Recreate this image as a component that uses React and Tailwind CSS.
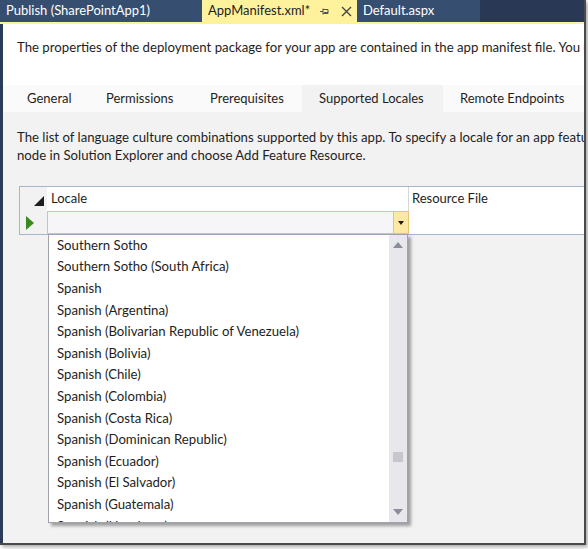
const locales = [
  "Southern Sotho",
  "Southern Sotho (South Africa)",
  "Spanish",
  "Spanish (Argentina)",
  "Spanish (Bolivarian Republic of Venezuela)",
  "Spanish (Bolivia)",
  "Spanish (Chile)",
  "Spanish (Colombia)",
  "Spanish (Costa Rica)",
  "Spanish (Dominican Republic)",
  "Spanish (Ecuador)",
  "Spanish (El Salvador)",
  "Spanish (Guatemala)",
  "Spanish (Honduras)",
];

const font = { fontFamily: "Lato, 'Noto Sans', sans-serif" };

function DocTab({ label, active, width, children }) {
  return (
    <div
      className={
        "flex items-center h-full pl-[6px] pr-[5px] text-[13px] shrink-0 " +
        width +
        (active ? " bg-[#fff29d] text-[#1e1e1e]" : " bg-[#364e6f] text-white")
      }
    >
      {label}
      {children}
    </div>
  );
}

function Pin() {
  return (
    <svg width="10" height="9" viewBox="0 0 10 9" className="ml-auto">
      <path d="M0 4.5h3M3 1.5v6M3 2.5h5v4H3M4 5.5h4" stroke="#555" strokeWidth="1" fill="none" />
    </svg>
  );
}

function Close() {
  return (
    <svg width="11" height="11" viewBox="0 0 11 11" className="ml-[11px]">
      <path d="M1 1l9 9M10 1l-9 9" stroke="#444" strokeWidth="1.4" />
    </svg>
  );
}

function OptionTabs() {
  const tabs = [
    ["General", "w-[79px]"],
    ["Permissions", "w-[104px]"],
    ["Prerequisites", "w-[109px]"],
    ["Supported Locales", "w-[141px]"],
    ["Remote Endpoints", "w-[141px]"],
  ];
  return (
    <div className="flex h-[27px] bg-[#fafafa] pl-[7px] mt-[2px]">
      {tabs.map(([t, w], i) => (
        <div
          key={t}
          className={
            "flex items-center pl-[17px] text-[13px] text-[#1e1e1e] shrink-0 " +
            w +
            (i === 3 ? " bg-[#f2f2f2]" : "")
          }
        >
          {t}
        </div>
      ))}
    </div>
  );
}

function ScrollArrow({ up }) {
  return (
    <svg width="10" height="6" viewBox="0 0 10 6">
      <path d={up ? "M0 6L5 0L10 6Z" : "M0 0L5 6L10 0Z"} fill="#8a8d9c" />
    </svg>
  );
}

function LocaleList() {
  return (
    <div className="absolute left-[28px] top-[47px] w-[360px] h-[289px] bg-white border border-[#9ea3ad] shadow-[3px_3px_3px_rgba(0,0,0,0.35)] flex overflow-hidden">
      <div className="flex-1 overflow-hidden pl-[8px]">
        {locales.map((l) => (
          <div key={l} className="h-[21.6px] flex items-center text-[13.2px] text-[#1e1e1e] whitespace-nowrap">
            {l}
          </div>
        ))}
      </div>
      <div className="w-[18px] bg-[#e8e8ec] flex flex-col items-center">
        <div className="mt-[7px]">
          <ScrollArrow up />
        </div>
        <div className="mt-[204px] w-[10px] h-[10px] bg-[#c6c7cd]" />
        <div className="mt-auto mb-[7px]">
          <ScrollArrow />
        </div>
      </div>
    </div>
  );
}

function Grid() {
  return (
    <div className="relative ml-[2px] mt-[22px] border-t border-l border-b border-[#a4b6cb]">
      <div className="flex h-[24px] bg-white">
        <div className="w-[27px] bg-[#f2f2f2] flex items-end justify-end pr-[3px] pb-[5px]">
          <svg width="10" height="10" viewBox="0 0 10 10">
            <path d="M10 0V10H0Z" fill="#1e1e1e" />
          </svg>
        </div>
        <div className="w-[362px] flex items-center pl-[4px] text-[13px] text-[#1e1e1e] border-r border-[#d6d6d6]">
          Locale
        </div>
        <div className="flex-1 flex items-center pl-[3px] text-[13px] text-[#1e1e1e]">Resource File</div>
      </div>
      <div className="flex h-[23px]">
        <div className="w-[27px] bg-[#f2f2f2] flex items-center pl-[6px]">
          <svg width="8" height="14" viewBox="0 0 8 14">
            <path d="M0 0L8 7L0 14Z" fill="#3a8a22" />
          </svg>
        </div>
        <div className="w-[362px] flex bg-[#f6f6f9] border border-[#e6c66c]">
          <div className="flex-1" />
          <div className="w-[15px] bg-[#fde9a4] border-l border-[#e6c66c] flex items-center justify-center">
            <svg width="6" height="4" viewBox="0 0 6 4">
              <path d="M0 0L3 4L6 0Z" fill="#1e1e1e" />
            </svg>
          </div>
        </div>
        <div className="flex-1 bg-white" />
      </div>
      <LocaleList />
    </div>
  );
}

export default function App() {
  return (
    <div className="w-[588px] h-[549px] bg-white overflow-hidden" style={font}>
      <div className="w-[586px] h-[545px] flex flex-col bg-white border-r-2 border-b-2 border-[#4a4a4a] shadow-[2px_2px_4px_rgba(0,0,0,0.35)] overflow-hidden">
        <div className="flex h-[22px] bg-[#293955] shrink-0">
          <DocTab label="Publish (SharePointApp1)" width="w-[202px]" />
          <DocTab label="AppManifest.xml*" active width="w-[155px]">
            <Pin />
            <Close />
          </DocTab>
          <DocTab label="Default.aspx" width="w-[123px]" />
        </div>
        <div className="flex-1 flex border-t-2 border-[#fff29d]">
          <div className="w-[3px] bg-[#2b3b58]" />
          <div className="flex-1 flex flex-col min-w-0">
            <div className="h-[59px] pl-[14px] pt-[14px] text-[13.2px] text-[#1e1e1e] whitespace-nowrap">
              The properties of the deployment package for your app are contained in the app manifest file. You can use the designer to edit them.
            </div>
            <OptionTabs />
            <div className="flex-1 bg-[#f2f2f2] pl-[14px] pt-[16px]">
              <div className="text-[13.2px] leading-[18px] text-[#1e1e1e] whitespace-nowrap">
                <div>The list of language culture combinations supported by this app. To specify a locale for an app feature, right-click the feature</div>
                <div>node in Solution Explorer and choose Add Feature Resource.</div>
              </div>
              <Grid />
            </div>
          </div>
        </div>
      </div>
    </div>
  );
}
